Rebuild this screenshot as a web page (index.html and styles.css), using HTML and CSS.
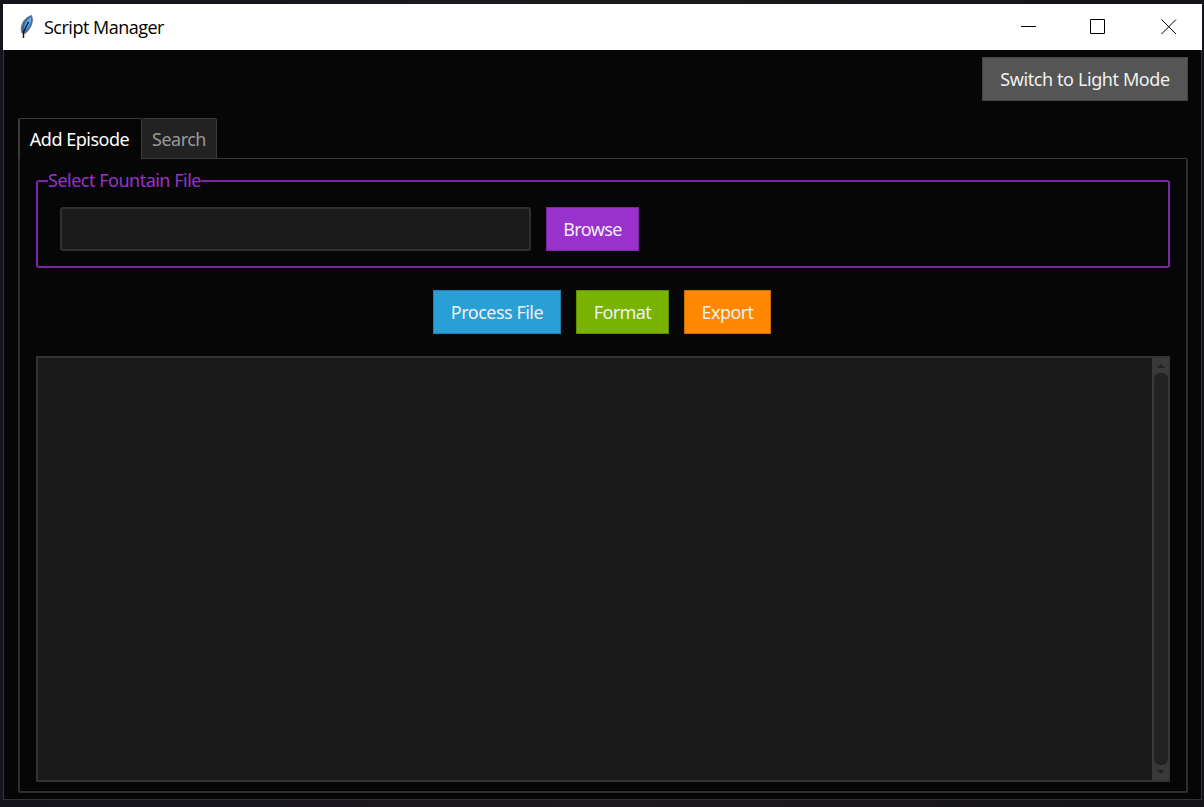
FILE: index.html
```
<!DOCTYPE html>
<html lang="en">
<head>
<meta charset="utf-8">
<title>Script Manager</title>
<link rel="stylesheet" href="styles.css">
</head>
<body>
<div class="window">
  <header class="titlebar">
    <svg class="feather" width="16" height="26" viewBox="0 0 16 26">
      <path d="M3 19C.5 13 4 4 12.500 1.500C15 7 12 15 6 19.500Z" fill="#326aa8" stroke="#777" stroke-width="1"/>
      <path d="M5 16C5 10 8 5 12 3C13 8 10 13 7 16Z" fill="#62a8ec"/>
      <path d="M9.500 8L4.500 18V24" fill="none" stroke="#111" stroke-width="1.400"/>
    </svg>
    <h1 class="title">Script Manager</h1>
    <div class="controls">
      <svg width="16" height="16" viewBox="0 0 16 16"><path d="M0 7.500H15"/></svg>
      <svg width="16" height="16" viewBox="0 0 16 16"><path d="M.5.5H14.500V14.500H.5Z"/></svg>
      <svg width="16" height="16" viewBox="0 0 16 16"><path d="M.5.500L15 15M15 .5L.5 15"/></svg>
    </div>
  </header>
  <main class="client">
    <div class="toolbar"><button class="btn mode">Switch to Light Mode</button></div>
    <nav class="tabs">
      <button class="tab active">Add Episode</button>
      <button class="tab search">Search</button>
    </nav>
    <section class="panel">
      <fieldset class="file">
        <legend>Select Fountain File</legend>
        <div class="row">
          <input class="path" type="text" aria-label="Fountain file">
          <button class="btn browse">Browse</button>
        </div>
      </fieldset>
      <div class="actions">
        <button class="btn process">Process File</button>
        <button class="btn format">Format</button>
        <button class="btn export">Export</button>
      </div>
      <div class="editor">
        <div class="text"></div>
        <div class="scrollbar">
          <svg width="16" height="16" viewBox="0 0 16 16"><path d="M4 10L8 6L12 10Z"/></svg>
          <div class="thumb"></div>
          <svg width="16" height="16" viewBox="0 0 16 16"><path d="M4 6L8 10L12 6Z"/></svg>
        </div>
      </div>
    </section>
  </main>
</div>
</body>
</html>
```
FILE: styles.css
```
* { box-sizing: border-box; }
body {
  margin: 0;
  height: 807px;
  padding: 4px 2px 6px 3px;
  overflow: hidden;
  background: linear-gradient(90deg, #15131c, #1d1a1e 50%, #141317);
  font: 18px/24px "Noto Sans", "Open Sans", sans-serif;
}
button { font: inherit; border: 0; padding: 0; white-space: nowrap; }
.window { display: flex; flex-direction: column; height: 796px; }
.titlebar {
  display: flex;
  align-items: center;
  height: 46px;
  padding-left: 15px;
  padding-right: 25px;
  background: #fff;
}
.feather { margin: 0 9px 0 1px; }
.title {
  margin: 0;
  flex: 1;
  color: #000;
  font: 18px/24px "Open Sans", "Noto Sans", sans-serif;
  letter-spacing: -.5px;
}
.controls { display: flex; gap: 54px; }
.controls svg { fill: none; stroke: #000; stroke-width: 1; }
.controls svg:nth-child(2) { margin: 0 1px 0 -1px; }
.client {
  flex: 1;
  display: flex;
  flex-direction: column;
  padding: 7px 13px 6px 14px;
  background: #060606;
  border: 1px solid #333;
  border-top: 0;
}
.toolbar { display: flex; justify-content: flex-end; height: 61px; }
.btn { height: 44px; color: #f0f0f0; letter-spacing: -.6px; border: 1px solid #0003; }
.mode { width: 206px; background: #555; letter-spacing: -.4px; }
.tabs { display: flex; height: 40px; }
.tab {
  height: 41px;
  border: 1px solid #3a3a3a;
  border-width: 1px 1px 1px 0;
  border-radius: 2px 2px 0 0;
  letter-spacing: -.6px;
  padding-top: 1px;
}
.active {
  position: relative;
  width: 124px;
  padding: 0 2px 0 0;
  border-left-width: 2px;
  border-bottom: 0;
  color: #fff;
  background: #060606;
  letter-spacing: -.5px;
}
.search { width: 75px; color: #999; background: #222; letter-spacing: -.5px; }
.panel {
  flex: 1;
  display: flex;
  flex-direction: column;
  padding: 9px 16px 9px;
  border: 2px solid #2e2e2e;
  border-top: 1px solid #3a3a3a;
  border-radius: 2px;
}
.file {
  margin: 0;
  height: 100px;
  padding: 13px 22px 0;
  border: 2px solid #7b26a5;
  border-radius: 3px;
}
.file legend {
  height: 26px;
  margin-left: -12px;
  padding: 0;
  color: #9932cc;
  letter-spacing: -.5px;
}
.row { display: flex; gap: 15px; }
.path {
  width: 471px;
  height: 44px;
  border: 2px solid #303030;
  border-radius: 3px;
  background: #1b1b1b;
  color: #fff;
}
.browse { width: 93px; background: #9932cc; }
.actions { display: flex; justify-content: center; gap: 15px; margin: 22px 2px 22px 0; }
.process { width: 128px; background: #2a9fd6; letter-spacing: -.5px; }
.format { width: 93px; background: #77b300; }
.export { width: 87px; background: #ff8800; }
.editor { flex: 1; display: flex; border: 2px solid #333; border-right-width: 1px; }
.text { flex: 1; background: #1a1a1a; }
.scrollbar {
  width: 17px;
  display: flex;
  flex-direction: column;
  align-items: center;
  background: #393939;
}
.scrollbar svg { fill: #222; flex: none; }
.thumb { width: 14px; flex: 1; margin: -1px 0; border-radius: 6px; background: #222; }
```
